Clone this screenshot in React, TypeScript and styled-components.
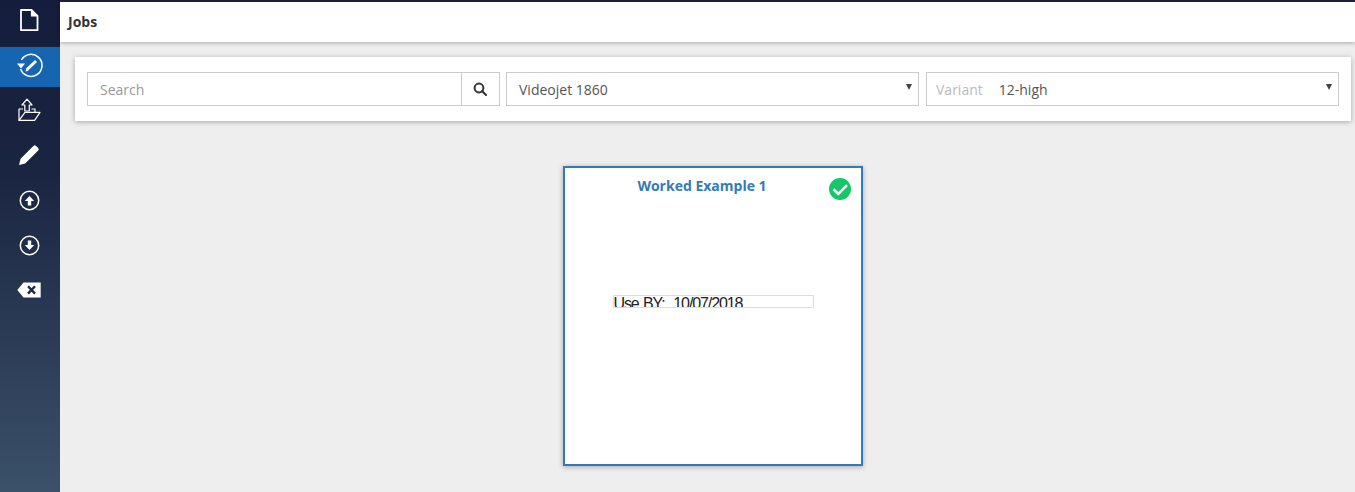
import React from "react";
import styled, { createGlobalStyle } from "styled-components";

const GlobalStyle = createGlobalStyle`
  html, body, #root {
    margin: 0;
    height: 100%;
  }
  body {
    font-family: "Open Sans", "Liberation Sans", sans-serif;
    font-size: 14px;
    color: #333;
    background: #eeeeee;
    overflow: hidden;
  }
`;

const Page = styled.div`
  display: flex;
  height: 492px;
`;

const Sidebar = styled.nav`
  flex: 0 0 60px;
  display: flex;
  flex-direction: column;
  gap: 5px;
  padding-top: 2px;
  background: linear-gradient(to bottom, #141d3b 0%, #1a2541 35%, #3b5069 100%);
`;

const NavItem = styled.div<{ $active?: boolean }>`
  height: 40px;
  box-sizing: border-box;
  padding: 0 2px 4px 0;
  display: flex;
  align-items: center;
  justify-content: center;
  background: ${(p) => (p.$active ? "#1565b0" : "transparent")};
`;

const Main = styled.main`
  flex: 1;
  min-width: 0;
  display: flex;
  flex-direction: column;
  border-top: 2px solid #1a2340;
`;

const Header = styled.header`
  height: 40px;
  box-sizing: border-box;
  padding: 0 0 2px 8px;
  display: flex;
  align-items: center;
  background: #fff;
  box-shadow: 0 1px 4px rgba(0, 0, 0, 0.3);
  font-weight: 700;
  font-size: 14px;
  color: #333;
`;

const Toolbar = styled.section`
  margin: 15px 4px 0 15px;
  height: 64px;
  box-sizing: border-box;
  padding: 15px 12px;
  display: flex;
  gap: 7px;
  background: #fff;
  box-shadow: 0 1px 5px rgba(0, 0, 0, 0.3);
`;

const SearchGroup = styled.div`
  flex: 0 0 413px;
  margin-right: -1px;
  display: flex;
  height: 34px;
  box-sizing: border-box;
  border: 1px solid #ccc;
`;

const SearchInput = styled.input`
  flex: 1;
  min-width: 0;
  border: 0;
  outline: 0;
  padding: 0 12px;
  font: inherit;
  color: #555;
  &::placeholder {
    color: #999;
    opacity: 1;
  }
`;

const SearchButton = styled.button`
  flex: 0 0 38px;
  border: 0;
  border-left: 1px solid #ccc;
  background: #fff;
  padding: 0 2px 0 0;
  display: flex;
  align-items: center;
  justify-content: center;
`;

const SelectBox = styled.div`
  flex: 0 0 413px;
  height: 34px;
  box-sizing: border-box;
  border: 1px solid #ccc;
  display: flex;
  align-items: center;
  padding: 0 6px 0 12px;
  color: #555;
`;

const VariantLabel = styled.span`
  color: #bbb;
  margin: 0 16px 0 -3px;
`;

const SelectValue = styled.span`
  flex: 1;
`;

const Caret = styled.span`
  width: 0;
  height: 0;
  margin-bottom: 4px;
  border-left: 3.5px solid transparent;
  border-right: 3.5px solid transparent;
  border-top: 6px solid #444;
`;

const Gallery = styled.div`
  flex: 1;
  display: flex;
  justify-content: center;
  padding: 45px 0 0 11px;
`;

const JobCard = styled.article`
  position: relative;
  width: 300px;
  height: 300px;
  box-sizing: border-box;
  border: 2px solid #337ab7;
  background: #fff;
  box-shadow: 0 1px 5px rgba(0, 0, 0, 0.3);
  display: flex;
  flex-direction: column;
  align-items: center;
`;

const CardTitle = styled.h3`
  margin: 8px 22px 0 0;
  font-size: 14px;
  line-height: 20px;
  font-weight: 700;
  color: #337ab7;
`;

const CheckBadge = styled.span`
  position: absolute;
  top: 10px;
  right: 10px;
  width: 22px;
  height: 22px;
  display: flex;
`;

const LabelField = styled.div`
  margin: 99px 0 0 0;
  width: 201px;
  height: 13px;
  box-sizing: border-box;
  border: 1px solid #ddd;
  overflow: hidden;
  font-family: "Liberation Sans", Arial, sans-serif;
  font-size: 16px;
  line-height: 16px;
  color: #222;
  white-space: pre;
  letter-spacing: -1.1px;
  word-spacing: 1px;
`;

const FileIcon = () => (
  <svg width="22" height="24" viewBox="0 0 22 24" fill="none" stroke="#fff" strokeWidth="1.8">
    <path d="M3 2h10.5L19.5 8v14.2H3z" strokeLinejoin="round" />
    <path d="M13.5 2v6h6" fill="#fff" strokeWidth="1.2" />
  </svg>
);

const HistoryEditIcon = () => (
  <svg width="28" height="26" viewBox="0 0 28 26" fill="none">
    <path d="M6.4 8A11 11 0 1 1 5.6 17" stroke="#fff" strokeWidth="1.5" />
    <path d="M2 11.5h8L6 16.5z" fill="#fff" />
    <path d="M12 17.5l9-8.5" stroke="#fff" strokeWidth="3" />
    <path d="M10.5 19.5l.8-3 2.2 2.2z" fill="#fff" />
  </svg>
);

const UploadFolderIcon = () => (
  <svg width="24" height="24" viewBox="0 0 24 24" fill="none" stroke="#fff" strokeWidth="1.2" strokeLinejoin="round">
    <path d="M10 1.2L15 7h-2.7v6H7.8V7H5z" />
    <path d="M2 22.4V11h4M14.5 11h3.5v3" />
    <path d="M2 22.4L8 14.4h15l-5.4 8z" />
  </svg>
);

const PencilIcon = () => (
  <svg width="22" height="22" viewBox="0 0 22 22" fill="#fff">
    <path d="M1 21l1.6-6.2L15.6 1.8a1.6 1.6 0 0 1 2.3 0l2.3 2.3a1.6 1.6 0 0 1 0 2.3L7.2 19.4z" />
  </svg>
);

const CircleArrowIcon = ({ down }: { down?: boolean }) => (
  <svg width="21" height="21" viewBox="0 0 21 21" fill="none">
    <circle cx="10.5" cy="10.5" r="9.2" stroke="#fff" strokeWidth="1.5" />
    <path
      d={down ? "M8.8 5.5h3.4v4.5h3l-4.7 5-4.7-5h3z" : "M8.8 15.5V11h-3l4.7-5 4.7 5h-3v4.5z"}
      fill="#fff"
    />
  </svg>
);

const BackspaceIcon = () => (
  <svg width="24" height="16" viewBox="0 0 24 16">
    <path d="M6.5 0.5H23.7v15H6.5L0.3 8z" fill="#fff" />
    <path d="M11 4.2l7 7.4M18 4.2l-7 7.4" stroke="#1f2b45" strokeWidth="2.4" />
  </svg>
);

const SearchIcon = () => (
  <svg width="14" height="14" viewBox="0 0 14 14" fill="none" stroke="#333" strokeWidth="2">
    <circle cx="6" cy="6" r="4.4" />
    <path d="M9.2 9.2l3.8 3.8" strokeLinecap="round" />
  </svg>
);

const CheckIcon = () => (
  <svg width="22" height="22" viewBox="0 0 22 22">
    <circle cx="11" cy="11" r="11" fill="#14c768" />
    <path d="M4.5 11.3l4.8 4.7 8.7-8.8" fill="none" stroke="#fff" strokeWidth="2.6" />
  </svg>
);

export default function App() {
  return (
    <Page>
      <GlobalStyle />
      <Sidebar>
        <NavItem>
          <FileIcon />
        </NavItem>
        <NavItem $active>
          <HistoryEditIcon />
        </NavItem>
        <NavItem>
          <UploadFolderIcon />
        </NavItem>
        <NavItem>
          <PencilIcon />
        </NavItem>
        <NavItem>
          <CircleArrowIcon />
        </NavItem>
        <NavItem>
          <CircleArrowIcon down />
        </NavItem>
        <NavItem>
          <BackspaceIcon />
        </NavItem>
      </Sidebar>
      <Main>
        <Header>Jobs</Header>
        <Toolbar>
          <SearchGroup>
            <SearchInput placeholder="Search" />
            <SearchButton>
              <SearchIcon />
            </SearchButton>
          </SearchGroup>
          <SelectBox>
            <SelectValue>Videojet 1860</SelectValue>
            <Caret />
          </SelectBox>
          <SelectBox>
            <VariantLabel>Variant</VariantLabel>
            <SelectValue>12-high</SelectValue>
            <Caret />
          </SelectBox>
        </Toolbar>
        <Gallery>
          <JobCard>
            <CardTitle>Worked Example 1</CardTitle>
            <CheckBadge>
              <CheckIcon />
            </CheckBadge>
            <LabelField>{"Use BY:  10/07/2018"}</LabelField>
          </JobCard>
        </Gallery>
      </Main>
    </Page>
  );
}
